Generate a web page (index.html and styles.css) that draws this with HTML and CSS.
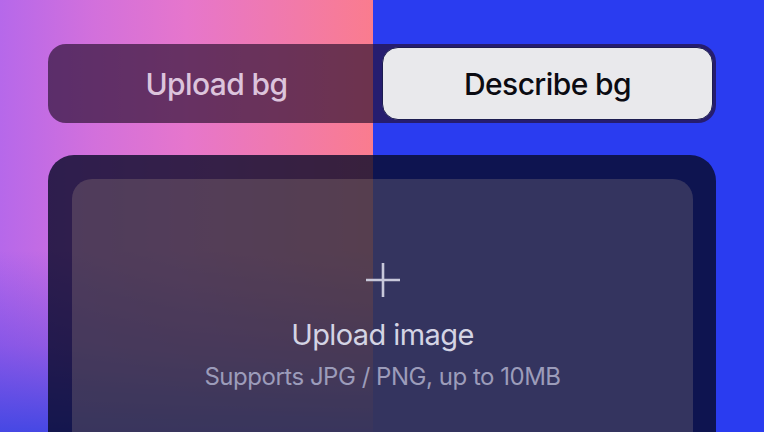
FILE: index.html
```html
<!DOCTYPE html>
<html>
<head>
  <title>Background</title>
  <link rel="stylesheet" href="styles.css">
</head>
<body>
<div class="page">
  <div class="toggle">
    <button class="toggle-option">Upload bg</button>
    <button class="toggle-option active">Describe bg</button>
  </div>
  <div class="panel">
    <div class="dropzone">
      <svg class="plus" width="36" height="36" viewBox="0 0 36 36">
        <path d="M18 1 V35 M1 18 H35" stroke="currentColor" stroke-width="2.6" fill="none"/>
      </svg>
      <div class="drop-title">Upload image</div>
      <div class="drop-hint">Supports JPG / PNG, up to 10MB</div>
    </div>
  </div>
</div>
</body>
</html>
```

FILE: styles.css
```css
html, body {
  margin: 0;
  height: 100%;
}

body {
  width: 764px;
  height: 432px;
  overflow: hidden;
  font-family: "Inter", "Noto Sans", sans-serif;
  background:
    linear-gradient(to right, transparent 373px, #2a3cf0 373px),
    linear-gradient(to bottom, rgba(70, 70, 228, 0) 58%, rgba(80, 66, 228, 0.45) 80%, rgba(70, 72, 228, 1) 100%),
    linear-gradient(to right, #b668ea, #d270dc 25%, #e676cc 50%, #f27aa8 80%, #fa7c8e 100%);
  background-size: 100% 100%, 373px 100%, 373px 100%;
  background-repeat: no-repeat;
}

.page {
  padding: 44px 48px 0 48px;
}

.toggle {
  display: grid;
  grid-template-columns: 1fr 1fr;
  padding: 3px;
  border-radius: 18px;
  background: rgba(36, 14, 44, 0.66);
}

.toggle-option {
  height: 73px;
  border: 1px solid transparent;
  border-radius: 16px;
  background: transparent;
  font-family: inherit;
  font-size: 30px;
  font-weight: 500;
  letter-spacing: -0.02em;
  color: #dcc4dc;
  padding: 0;
}

.toggle-option.active {
  background: #e9e9ec;
  border-color: #1c1c50;
  color: #0b0b12;
}

.panel {
  margin-top: 32px;
  padding: 24px 23px 0 24px;
  border-radius: 26px 26px 0 0;
  background: rgba(8, 10, 40, 0.8);
  height: 260px;
}

.dropzone {
  height: 100%;
  border-radius: 20px 20px 0 0;
  background: rgba(220, 190, 160, 0.19);
  display: flex;
  flex-direction: column;
  align-items: center;
  padding-top: 83px;
  box-sizing: border-box;
  color: #d4d4e4;
}

.plus {
  color: #c8c8da;
}

.drop-title {
  margin-top: 19px;
  font-size: 29px;
  font-weight: 400;
  letter-spacing: -0.02em;
}

.drop-hint {
  margin-top: 10px;
  font-size: 24px;
  color: #9c9cba;
  letter-spacing: -0.02em;
}
```
